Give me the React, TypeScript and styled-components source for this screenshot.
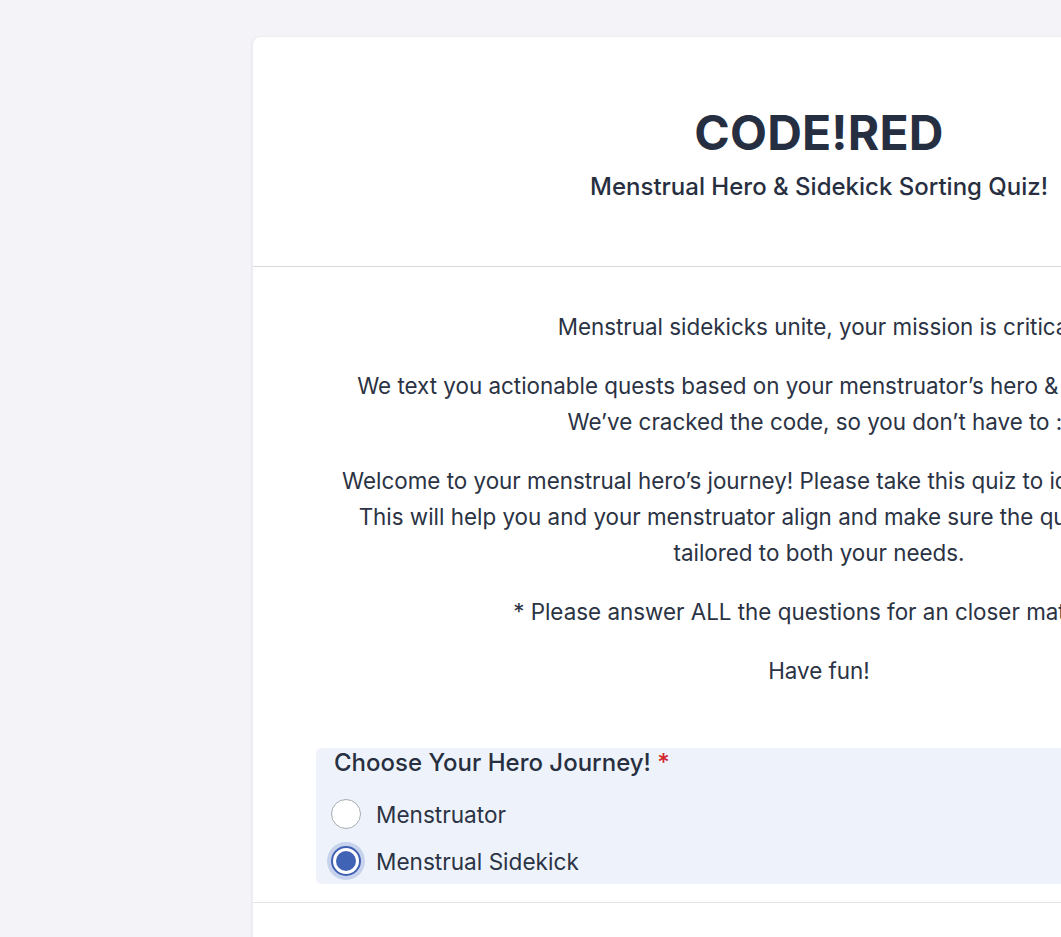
import React from "react";
import styled, { createGlobalStyle } from "styled-components";

const Global = createGlobalStyle`
  html, body { margin: 0; padding: 0; overflow: hidden; background: #f3f3f8; }
  body { font-family: Inter, "Noto Sans", sans-serif; color: #272f40; }
`;

const Page = styled.div`
  padding: 37px 0 0 252px;
  min-height: 937px;
  box-sizing: border-box;
`;

const Card = styled.div`
  width: 1132px;
  background: #fff;
  border-radius: 8px;
  box-shadow: 0 0 3px rgba(40, 40, 90, 0.08);
  border-left: 1px solid #ebebf2;
`;

const Header = styled.header`
  display: flex;
  flex-direction: column;
  align-items: center;
  padding: 71px 0 0;
  height: 230px;
  box-sizing: border-box;
  border-bottom: 1px solid #d9d9de;
`;

const Title = styled.h1`
  margin: 0;
  font-size: 48px;
  line-height: 50px;
  font-weight: 700;
  color: #262f41;
  letter-spacing: 0.2px;
`;

const Subtitle = styled.h2`
  margin: 14px 0 0;
  font-size: 24px;
  line-height: 30px;
  font-weight: 500;
  color: #272f40;
`;

const Body = styled.section`
  padding: 42px 63px 18px;
  border-bottom: 1px solid #e3e3e8;
`;

const Intro = styled.div`
  text-align: center;
  margin-bottom: 59px;
`;

const Para = styled.p`
  margin: 0 0 23px;
  font-size: 22.4px;
  line-height: 36px;
  color: #2b3344;
  white-space: nowrap;
  &:last-child { margin-bottom: 0; }
`;

const Question = styled.fieldset`
  margin: 0;
  border: 0;
  background: #eef3fb;
  border-radius: 6px;
  padding: 0 18px 4px 11px;
  min-width: 0;
`;

const Legend = styled.div`
  font-size: 24px;
  line-height: 30px;
  font-weight: 500;
  color: #272f40;
  padding-left: 7px;
  margin-bottom: 17px;
`;

const Required = styled.span`
  color: #d3252f;
`;

const Options = styled.div`
  display: flex;
  flex-direction: column;
  gap: 9px;
`;

const OptionRow = styled.label`
  display: flex;
  align-items: center;
  gap: 11px;
  height: 38px;
  font-size: 22.6px;
  color: #2b3344;
  cursor: pointer;
`;

const RadioOuter = styled.span<{ $checked: boolean }>`
  width: 38px;
  height: 38px;
  flex: none;
  border-radius: 50%;
  display: flex;
  align-items: center;
  justify-content: center;
  background: ${(p) => (p.$checked ? "rgba(66, 99, 181, 0.22)" : "transparent")};
`;

const RadioCircle = styled.span<{ $checked: boolean }>`
  width: 30px;
  height: 30px;
  box-sizing: border-box;
  border-radius: 50%;
  background: #fff;
  border: ${(p) => (p.$checked ? "2px solid #3f60b3" : "1px solid #a9abb2")};
  display: flex;
  align-items: center;
  justify-content: center;
`;

const RadioDot = styled.span`
  width: 20px;
  height: 20px;
  border-radius: 50%;
  background: #4163b6;
`;

const NextSection = styled.section`
  height: 120px;
`;

const Radio = ({ checked }: { checked: boolean }) => (
  <RadioOuter $checked={checked}>
    <RadioCircle $checked={checked}>{checked && <RadioDot />}</RadioCircle>
  </RadioOuter>
);

const options = [
  { label: "Menstruator", checked: false },
  { label: "Menstrual Sidekick", checked: true },
];

export default function App() {
  return (
    <>
      <Global />
      <Page>
        <Card>
          <Header>
            <Title>CODE!RED</Title>
            <Subtitle>Menstrual Hero &amp; Sidekick Sorting Quiz!</Subtitle>
          </Header>
          <Body>
            <Intro>
              <Para>Menstrual sidekicks unite, your mission is critical!</Para>
              <Para>
                We text you actionable quests based on your menstruator’s hero &amp; sidekick personality.
                <br />
                We’ve cracked the code, so you don’t have to :)
              </Para>
              <Para>
                Welcome to your menstrual hero’s journey! Please take this quiz to identify your hero type.
                <br />
                This will help you and your menstruator align and make sure the quests you receive are
                <br />
                tailored to both your needs.
              </Para>
              <Para>* Please answer ALL the questions for an closer matchup!</Para>
              <Para>Have fun!</Para>
            </Intro>
            <Question>
              <Legend>
                Choose Your Hero Journey! <Required>*</Required>
              </Legend>
              <Options>
                {options.map((o) => (
                  <OptionRow key={o.label}>
                    <Radio checked={o.checked} />
                    {o.label}
                  </OptionRow>
                ))}
              </Options>
            </Question>
          </Body>
          <NextSection />
        </Card>
      </Page>
    </>
  );
}
